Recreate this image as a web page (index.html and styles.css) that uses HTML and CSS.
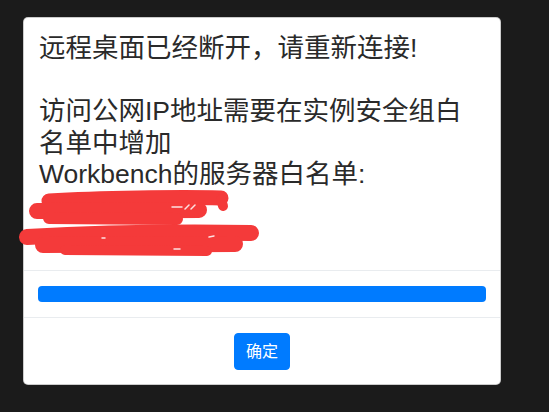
FILE: index.html
```html
<!DOCTYPE html>
<html lang="zh-CN">
<head>
<meta charset="utf-8">
<title>远程桌面已经断开</title>
<link rel="stylesheet" href="styles.css">
</head>
<body>
<div class="modal">
  <div class="modal-body">
    <p class="msg">远程桌面已经断开，请重新连接!<br><br>访问公网IP地址需要在实例安全组白<br>名单中增加<br>Workbench的服务器白名单:</p>
    <svg class="redact" width="446" height="63" viewBox="0 0 446 63" aria-hidden="true">
      <g fill="none" stroke="#f43a3a" stroke-linecap="round" stroke-linejoin="round">
        <path d="M 10 10 C 60 7, 140 6, 182 7" stroke-width="15"/>
        <path d="M 182 8 L 184 15" stroke-width="10"/>
        <path d="M -2 20 L 160 19" stroke-width="16"/>
        <path d="M 10 27 L 138 28" stroke-width="12"/>
        <path d="M -12 46 C 60 42, 150 41, 212 42" stroke-width="16"/>
        <path d="M 4 54 L 196 53" stroke-width="16"/>
        <path d="M 26 59 L 168 60" stroke-width="10"/>
      </g>
      <g stroke="#ffffff" stroke-width="1.5" stroke-linecap="round" opacity="0.85">
        <path d="M 133 16 L 143 16"/>
        <path d="M 146 18 L 150 14"/>
        <path d="M 152 18 L 156 14"/>
        <path d="M 63 47 L 66 47"/>
        <path d="M 135 58 L 141 58"/>
        <path d="M 170 46 L 175 45"/>
      </g>
    </svg>
  </div>
  <div class="modal-progress">
    <div class="progress"><div class="progress-bar" style="width:100%"></div></div>
  </div>
  <div class="modal-footer">
    <button class="btn" type="button">确定</button>
  </div>
</div>
</body>
</html>
```
FILE: styles.css
```css
html, body {
  margin: 0;
  padding: 0;
}
body {
  background: #1b1b1b;
  font-family: "Liberation Sans", "Noto Sans CJK SC", sans-serif;
  color: #2a2a2a;
  height: 412px;
  overflow: hidden;
}
.modal {
  margin: 17px 0 0 23px;
  width: 478px;
  box-sizing: border-box;
  background: #ffffff;
  border: 1px solid rgba(0, 0, 0, 0.2);
  border-radius: 5px;
  display: flex;
  flex-direction: column;
}
.modal-body {
  padding: 15px 15px 16px 15px;
  border-bottom: 1px solid #e9ecef;
}
.msg {
  margin: 0;
  font-size: 26.5px;
  line-height: 31.5px;
}
.redact {
  display: block;
  overflow: visible;
}
.modal-progress {
  padding: 15px 14px 15px 14px;
  border-bottom: 1px solid #e9ecef;
}
.progress {
  height: 16px;
  background: #e9ecef;
  border-radius: 4px;
  overflow: hidden;
  display: flex;
}
.progress-bar {
  background: #007bff;
  height: 100%;
}
.modal-footer {
  display: flex;
  justify-content: center;
  padding: 15px 16px 14px 16px;
}
.btn {
  font-family: "Liberation Sans", "Noto Sans CJK SC", sans-serif;
  font-size: 16px;
  line-height: 23px;
  padding: 6px 11px;
  color: #ffffff;
  background: #007bff;
  border: 1px solid #007bff;
  border-radius: 4px;
}
```
